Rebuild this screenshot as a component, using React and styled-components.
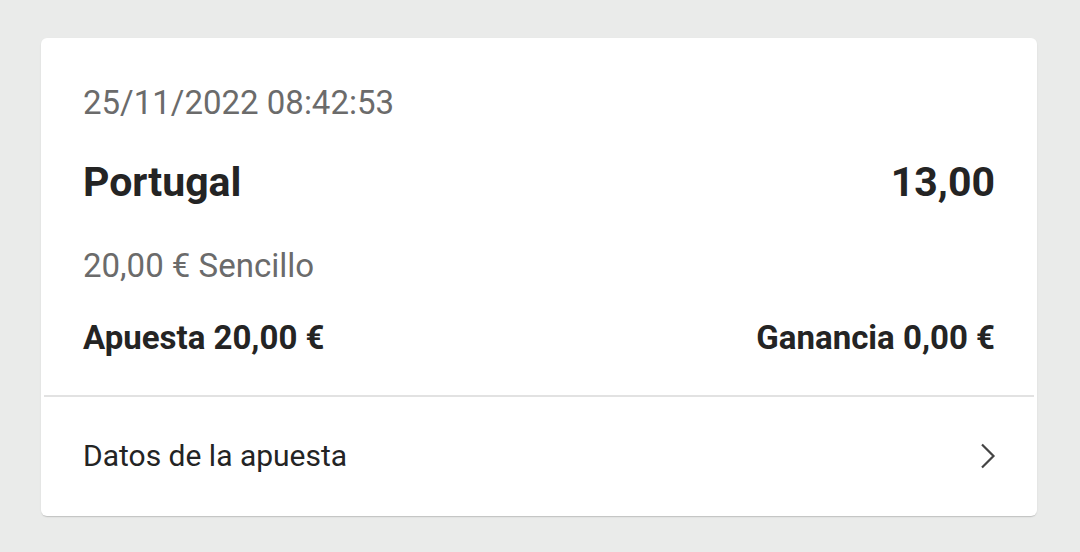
import React from "react";
import styled, { createGlobalStyle } from "styled-components";

const Global = createGlobalStyle`
  html, body { margin: 0; padding: 0; background: #eaebea; }
  body { font-family: Roboto, "Noto Sans", "Liberation Sans", sans-serif; -webkit-font-smoothing: antialiased; }
`;

const Page = styled.div`
  width: 1080px;
  height: 552px;
  box-sizing: border-box;
  padding: 38px 43px 0 41px;
  background: #eaebea;
`;

const Card = styled.div`
  background: #fff;
  border-radius: 6px;
  box-shadow: 0 2px 1px -1px rgba(0, 0, 0, 0.12), 0 1px 2px rgba(0, 0, 0, 0.08);
  display: flex;
  flex-direction: column;
`;

const Body = styled.div`
  padding: 45px 42px 38px 42px;
  display: flex;
  flex-direction: column;
`;

const Line = styled.div`
  display: flex;
  justify-content: space-between;
  align-items: baseline;
  margin-top: ${(p) => p.$gap || 0}px;
`;

const Muted = styled.span`
  font-size: 33px;
  line-height: 39px;
  color: #6b6b6b;
  font-weight: 400;
`;

const Title = styled.span`
  font-size: 41px;
  line-height: 49px;
  font-weight: 700;
  color: #242424;
`;

const Strong = styled.span`
  font-size: 33px;
  line-height: 39px;
  font-weight: 700;
  color: #242424;
`;

const Divider = styled.div`
  height: 2px;
  background: #e2e2e2;
  margin: 0 3px;
`;

const LinkRow = styled.div`
  height: 119px;
  box-sizing: border-box;
  padding: 0 41px 2px 42px;
  display: flex;
  align-items: center;
  justify-content: space-between;
`;

const LinkText = styled.span`
  font-size: 30px;
  color: #242424;
`;

const Chevron = () => (
  <svg width="16" height="26" viewBox="0 0 16 26" fill="none">
    <path d="M2 1.5 L13.5 13 L2 24.5" stroke="#444" strokeWidth="2.2" />
  </svg>
);

export default function App() {
  return (
    <>
      <Global />
      <Page>
        <Card>
          <Body>
            <Line>
              <Muted>25/11/2022 08:42:53</Muted>
            </Line>
            <Line $gap={36}>
              <Title>Portugal</Title>
              <Title>13,00</Title>
            </Line>
            <Line $gap={39}>
              <Muted>20,00 € Sencillo</Muted>
            </Line>
            <Line $gap={33}>
              <Strong>Apuesta 20,00 €</Strong>
              <Strong>Ganancia 0,00 €</Strong>
            </Line>
          </Body>
          <Divider />
          <LinkRow>
            <LinkText>Datos de la apuesta</LinkText>
            <Chevron />
          </LinkRow>
        </Card>
      </Page>
    </>
  );
}
